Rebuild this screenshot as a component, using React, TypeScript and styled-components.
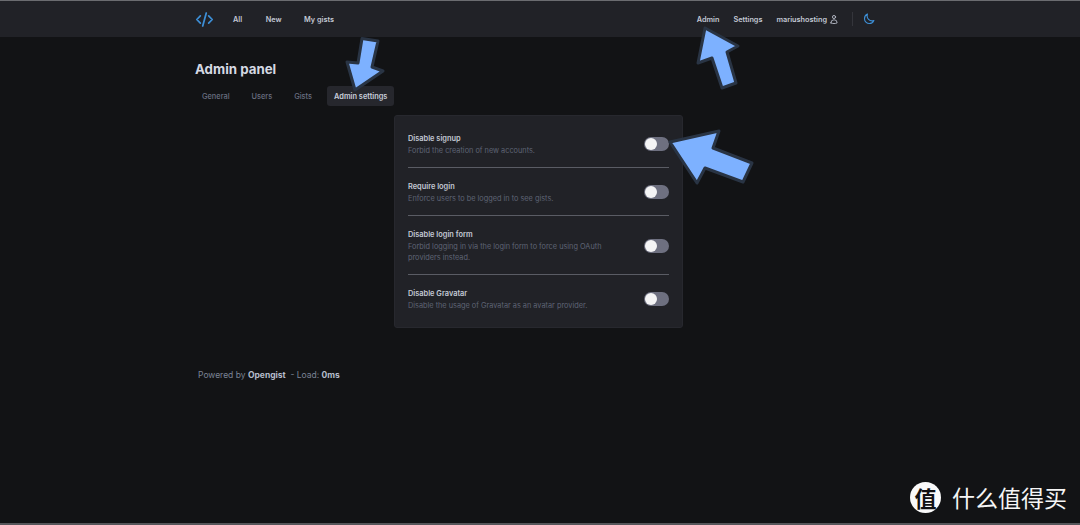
import styled, { createGlobalStyle } from 'styled-components';

const GlobalStyle = createGlobalStyle`
    html, body {
        margin: 0;
        padding: 0;
        background-color: #121315;
    }
    body {
        font-family: Inter, "Noto Sans", "Noto Sans CJK SC", sans-serif;
    }
`;

const Page = styled.div`
    position: relative;
    box-sizing: border-box;
    width: 1080px;
    height: 525px;
    overflow: hidden;
    background-color: #121315;
    border-top: 1px solid #6b6c70;
    border-bottom: 2px solid #55565a;
`;

const Header = styled.header`
    height: 36px;
    background-color: #212227;
    display: flex;
    justify-content: center;
`;

const Container = styled.div`
    width: 690px;
    display: flex;
    align-items: center;
    justify-content: space-between;
`;

const NavGroup = styled.nav`
    display: flex;
    align-items: center;
`;

const NavLink = styled.a<{ $gap: number }>`
    margin-left: ${(props) => props.$gap}px;
    padding-top: 1px;
    font-size: 7.3px;
    font-weight: 600;
    line-height: 12px;
    color: #c3c8d4;
    white-space: nowrap;
`;

const Logo = styled.svg`
    width: 19px;
    height: 19px;
    color: #3d8fd6;
    display: block;
`;

const UserIcon = styled.svg`
    width: 10px;
    height: 11px;
    margin-left: 2px;
    color: #c3c8d4;
    display: block;
`;

const Divider = styled.span`
    width: 1px;
    height: 14px;
    margin: 0 10px 0 13px;
    background-color: #34353b;
`;

const MoonIcon = styled.svg`
    width: 12px;
    height: 12px;
    margin-right: 10px;
    color: #3d8fd6;
    display: block;
`;

const Main = styled.main`
    width: 690px;
    margin: 0 auto;
`;

const Title = styled.h1`
    margin: 23px 0 0;
    font-size: 13.3px;
    font-weight: 700;
    line-height: 18px;
    color: #d5d9e3;
`;

const Tabs = styled.div`
    display: flex;
    gap: 8px;
    margin-top: 8px;
`;

const Tab = styled.a<{ $active?: boolean }>`
    height: 20px;
    padding: 0 7px;
    border-radius: 3px;
    font-size: 7.4px;
    font-weight: ${(props) => (props.$active ? 600 : 500)};
    line-height: 21px;
    white-space: nowrap;
    color: ${(props) => (props.$active ? '#c9cedb' : '#6a7082')};
    background-color: ${(props) => (props.$active ? '#26272d' : 'transparent')};
`;

const Panel = styled.section`
    box-sizing: border-box;
    width: 289px;
    margin: 9px 0 0 199px;
    padding: 16px 13px;
    background-color: #212227;
    border: 1px solid #27282e;
    border-radius: 3px;
`;

const Row = styled.div`
    display: flex;
    align-items: center;
    justify-content: space-between;
    padding: 0 0 11px;
    border-bottom: 1px solid #5a5c64;
    margin-bottom: 12px;

    &:last-child {
        padding-bottom: 0;
        margin-bottom: 0;
        border-bottom: none;
    }
`;

const RowText = styled.div`
    width: 225px;
`;

const RowTitle = styled.div`
    font-size: 7.4px;
    font-weight: 600;
    line-height: 13px;
    color: #c3c8d4;
`;

const RowDescription = styled.div`
    font-size: 7.33px;
    line-height: 11px;
    color: #5f6475;
`;

const Toggle = styled.span`
    position: relative;
    flex: none;
    width: 25px;
    height: 14px;
    border-radius: 7px;
    background-color: #6e7080;

    &::after {
        content: '';
        position: absolute;
        top: 1px;
        left: 1px;
        width: 12px;
        height: 12px;
        border-radius: 50%;
        background-color: #f4f4f5;
    }
`;

const Footer = styled.footer`
    margin: 40px 0 0 3px;
    font-size: 8.5px;
    line-height: 14px;
    color: #7b8395;
`;

const FooterStrong = styled.strong`
    font-weight: 700;
    color: #b5bccb;
`;

const Annotations = styled.svg`
    position: absolute;
    top: -1px;
    left: 0;
    width: 1080px;
    height: 525px;
    pointer-events: none;
`;

const Watermark = styled.div`
    position: absolute;
    top: 481px;
    left: 910px;
    display: flex;
    align-items: center;
    gap: 11px;
`;

const WatermarkBadge = styled.span`
    width: 31px;
    height: 31px;
    border-radius: 50%;
    background-color: #fafafa;
    color: #111113;
    font-family: "Noto Sans CJK SC", sans-serif;
    font-size: 22px;
    font-weight: 700;
    line-height: 31px;
    text-align: center;
`;

const WatermarkText = styled.span`
    font-family: "Noto Sans CJK SC", sans-serif;
    font-size: 23px;
    font-weight: 400;
    line-height: 31px;
    color: #f5f5f5;
    white-space: nowrap;
`;

const settings = [
    { title: 'Disable signup', text: 'Forbid the creation of new accounts.' },
    { title: 'Require login', text: 'Enforce users to be logged in to see gists.' },
    { title: 'Disable login form', text: 'Forbid logging in via the login form to force using OAuth providers instead.' },
    { title: 'Disable Gravatar', text: 'Disable the usage of Gravatar as an avatar provider.' },
];

const arrows = [
    '362,38.5 378,41 372,67 383,71 355,90 347,62 358,63',
    '705,28 738,46 727,52 736,83 722,88 712,58 698,63',
    '670,142 719,131 713,148 752,163 743,182 705,168 697,183',
];

export default function App() {
    return (
        <Page>
            <GlobalStyle />
            <Header>
                <Container>
                    <NavGroup>
                        <Logo viewBox="0 0 24 24" fill="none" stroke="currentColor" strokeWidth={2.2} strokeLinecap="round" strokeLinejoin="round">
                            <path d="M6.75 7.5 2.25 12l4.5 4.5M17.25 7.5l4.5 4.5-4.5 4.5M14.25 3.75l-4.5 16.5" />
                        </Logo>
                        <NavLink $gap={19}>All</NavLink>
                        <NavLink $gap={23.5}>New</NavLink>
                        <NavLink $gap={22.5}>My gists</NavLink>
                    </NavGroup>
                    <NavGroup>
                        <NavLink $gap={0}>Admin</NavLink>
                        <NavLink $gap={14}>Settings</NavLink>
                        <NavLink $gap={14}>mariushosting</NavLink>
                        <UserIcon viewBox="0 0 24 24" fill="none" stroke="currentColor" strokeWidth={2} strokeLinecap="round" strokeLinejoin="round">
                            <path d="M15.75 6a3.75 3.75 0 1 1-7.5 0 3.75 3.75 0 0 1 7.5 0ZM4.5 20.12a7.5 7.5 0 0 1 15 0A17.93 17.93 0 0 1 12 21.75c-2.68 0-5.22-.58-7.5-1.63Z" />
                        </UserIcon>
                        <Divider />
                        <MoonIcon viewBox="0 0 24 24" fill="none" stroke="currentColor" strokeWidth={2.2} strokeLinecap="round" strokeLinejoin="round">
                            <path d="M21.75 15A9.72 9.72 0 0 1 18 15.75 9.75 9.75 0 0 1 8.25 6c0-1.33.27-2.6.75-3.75A9.75 9.75 0 0 0 3 11.25 9.75 9.75 0 0 0 12.75 21a9.75 9.75 0 0 0 9-6Z" />
                        </MoonIcon>
                    </NavGroup>
                </Container>
            </Header>
            <Main>
                <Title>Admin panel</Title>
                <Tabs>
                    <Tab>General</Tab>
                    <Tab>Users</Tab>
                    <Tab>Gists</Tab>
                    <Tab $active>Admin settings</Tab>
                </Tabs>
                <Panel>
                    {settings.map((item) => (
                        <Row key={item.title}>
                            <RowText>
                                <RowTitle>{item.title}</RowTitle>
                                <RowDescription>{item.text}</RowDescription>
                            </RowText>
                            <Toggle />
                        </Row>
                    ))}
                </Panel>
                <Footer>
                    Powered by <FooterStrong>Opengist</FooterStrong> &nbsp;- Load: <FooterStrong>0ms</FooterStrong>
                </Footer>
            </Main>
            <Annotations viewBox="0 0 1080 525">
                {arrows.map((points) => (
                    <polygon key={points} points={points} fill="#7db1ff" stroke="#293444" strokeWidth={3} strokeLinejoin="round" />
                ))}
            </Annotations>
            <Watermark>
                <WatermarkBadge>值</WatermarkBadge>
                <WatermarkText>什么值得买</WatermarkText>
            </Watermark>
        </Page>
    );
}
